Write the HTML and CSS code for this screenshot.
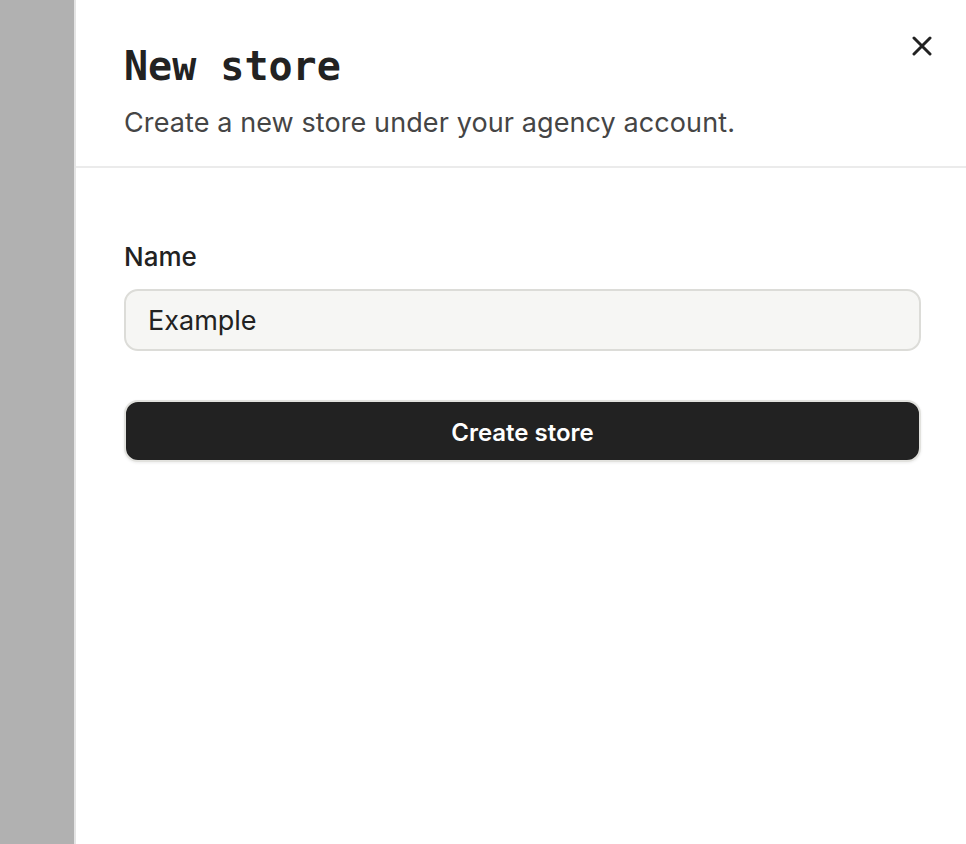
FILE: index.html
```html
<!DOCTYPE html>
<html lang="en">
  <head>
    <meta charset="UTF-8" />
    <meta name="viewport" content="width=device-width, initial-scale=1.0" />
    <title>New store</title>
    <link rel="stylesheet" href="styles.css">
  </head>
  <body>
    <div class="backdrop"></div>

    <aside class="drawer">
      <header class="drawer-header">
        <h1>New store</h1>
        <p>Create a new store under your agency account.</p>
        <button class="close-btn" aria-label="Close">
          <svg width="20" height="20" viewBox="0 0 20 20" fill="none" stroke="currentColor" stroke-width="3" stroke-linecap="round">
            <path d="M2 2L18 18M18 2L2 18" />
          </svg>
        </button>
      </header>

      <form class="drawer-body" onsubmit="return false">
        <div class="field">
          <label for="storeName">Name</label>
          <input type="text" id="storeName" value="Example" />
        </div>
        <button type="submit" class="primary-btn">Create store</button>
      </form>
    </aside>
  </body>
</html>
```

FILE: styles.css
```css
* {
  margin: 0;
  padding: 0;
  box-sizing: border-box;
}

body {
  display: flex;
  min-height: 100vh;
  font-family: "Inter", "Noto Sans", sans-serif;
  color: #222;
  background: #fff;
}

.backdrop {
  width: 74px;
  flex-shrink: 0;
  background: #b1b1b1;
}

.drawer {
  flex: 1;
  background: #fff;
  border-left: 2px solid #e4e4e4;
}

.drawer-header {
  position: relative;
  padding: 42px 45px 26px 48px;
  border-bottom: 2px solid #ebebeb;
}

.drawer-header h1 {
  font-family: "DejaVu Sans Mono", "Liberation Mono", monospace;
  font-size: 40px;
  font-weight: bold;
  line-height: 48px;
  color: #222;
}

.drawer-header p {
  margin-top: 16px;
  font-size: 27px;
  line-height: 34px;
  letter-spacing: 0.1px;
  color: #454545;
}

.close-btn {
  position: absolute;
  top: 36px;
  right: 34px;
  width: 20px;
  height: 20px;
  background: none;
  border: none;
  color: #222;
  cursor: pointer;
}

.close-btn svg {
  display: block;
}

.drawer-body {
  padding: 74px 45px 0 48px;
}

.field label {
  display: block;
  font-size: 26px;
  font-weight: 500;
  line-height: 30px;
  color: #222;
}

.field input {
  display: block;
  width: 100%;
  height: 62px;
  margin-top: 17px;
  padding: 0 22px;
  font-family: inherit;
  font-size: 27px;
  color: #222;
  background: #f6f6f4;
  border: 2px solid #dcdcd8;
  border-radius: 14px;
  outline: none;
}

.primary-btn {
  display: block;
  width: 100%;
  height: 62px;
  margin-top: 49px;
  padding-top: 3px;
  font-family: inherit;
  font-size: 24px;
  font-weight: 600;
  color: #fff;
  background: #222;
  border: 2px solid #e2e2de;
  border-radius: 14px;
  box-shadow: 0 1px 3px rgba(0, 0, 0, 0.08);
  cursor: pointer;
}
```
